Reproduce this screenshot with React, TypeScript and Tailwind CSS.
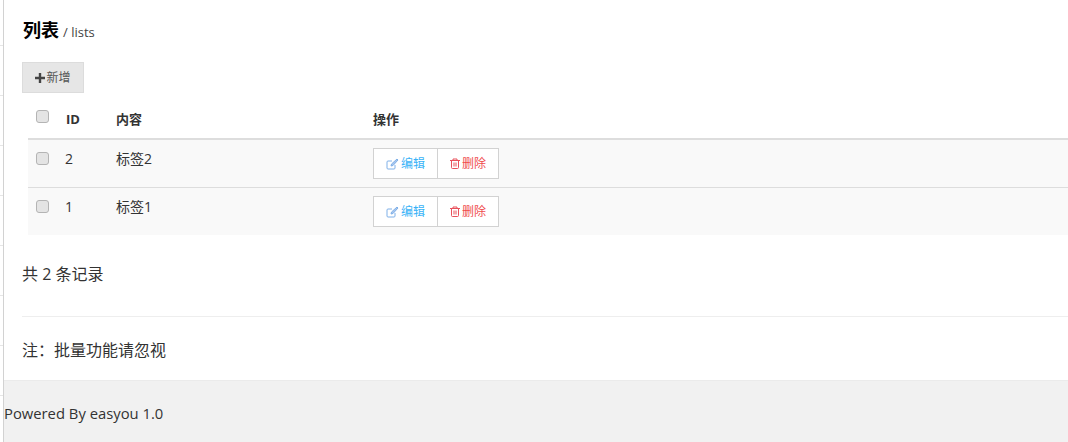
const font = { fontFamily: '"Open Sans", "Noto Sans CJK SC", sans-serif' };

function Check() {
  return <span className="block w-[13px] h-[13px] rounded-[3px] border border-[#b4b4b4] bg-[#e4e4e4]" />;
}

function Row({ id, name }: { id: string; name: string }) {
  return (
    <div className="flex h-[48px] last:h-[47px] border-b border-[#dddddd] last:border-b-0 bg-[#f9f9f9] text-[14px] text-[#333]">
      <div className="w-[37px] pl-[8px] pt-[12px]"><Check /></div>
      <div className="w-[51px] pt-[9px] leading-[20px]">{id}</div>
      <div className="w-[257px] pt-[9px] leading-[20px]">{name}</div>
      <div className="pt-[8px]">
        <div className="flex h-[31px] text-[12px] leading-[29px]">
          <div className="w-[65px] flex items-center justify-center gap-[2px] bg-white border border-[#d2d2d2] text-[#39b3f7]">
            <svg width="13" height="12" viewBox="0 0 13 12" fill="none" stroke="#7fb0e8" strokeWidth="1">
              <path d="M9 7v3a1 1 0 0 1-1 1H2a1 1 0 0 1-1-1V4a1 1 0 0 1 1-1h4" />
              <path d="M5 8l.5-2L11 1l1 1-5 5.500z" fill="#a9c6ee" />
            </svg>
            <span>编辑</span>
          </div>
          <div className="w-[62px] -ml-px flex items-center justify-center gap-[2px] bg-white border border-[#d2d2d2] text-[#ef4c4c]">
            <svg width="10" height="11" viewBox="0 0 10 11" fill="none" stroke="#e8505b" strokeWidth="1">
              <path d="M0 2.500h10M3 2V1h4v1M1.500 3v6.500a1 1 0 0 0 1 1h5a1 1 0 0 0 1-1V3M4 4.500v4M6 4.500v4" />
            </svg>
            <span>删除</span>
          </div>
        </div>
      </div>
    </div>
  );
}

export default function App() {
  return (
    <div style={font} className="relative h-[442px] w-[1068px] overflow-hidden bg-white text-[#333]">
      <div className="absolute left-0 top-0 h-full w-[4px] border-r border-[#d2d2d2]">
        <div className="h-[46px] border-b border-[#e6e6e6]" />
        <div className="h-[50px] border-b border-[#e6e6e6]" />
        <div className="h-[50px] border-b border-[#e6e6e6]" />
        <div className="h-[50px] border-b border-[#e6e6e6]" />
        <div className="h-[50px] border-b border-[#e6e6e6]" />
        <div className="h-[50px] border-b border-[#e6e6e6]" />
        <div className="h-[50px] border-b border-[#e6e6e6]" />
        <div className="h-[50px] border-b border-[#e6e6e6]" />
      </div>
      <div className="pl-[22px]">
        <div className="pt-[18px] h-[62px] flex items-baseline gap-[4px] pl-px">
          <span className="text-[18px] font-bold leading-[25px] text-black">列表</span>
          <span className="text-[13px] text-[#444]">/ lists</span>
        </div>
        <div className="flex h-[31px] w-[62px] items-center justify-center gap-[1px] bg-[#e6e6e6] border border-[#dcdcdc] text-[12px] text-[#555]">
          <svg width="10" height="10" viewBox="0 0 10 10" fill="#444">
            <path d="M3.800 0h2.400v3.800H10v2.400H6.200V10H3.800V6.200H0V3.800h3.800z" />
          </svg>
          <span>新增</span>
        </div>
        <div className="ml-[6px]">
          <div className="flex h-[47px] border-b-2 border-[#dddddd] text-[13px] font-bold text-[#333]">
            <div className="w-[37px] pl-[8px] pt-[17px]"><Check /></div>
            <div className="w-[51px] pl-px pt-[16px] leading-[20px]">ID</div>
            <div className="w-[257px] pt-[16px] leading-[20px]">内容</div>
            <div className="pt-[16px] leading-[20px]">操作</div>
          </div>
          <Row id="2" name="标签2" />
          <Row id="1" name="标签1" />
        </div>
        <div className="h-[82px] pt-[29px] text-[16px] leading-[20px] border-b border-[#eeeeee]">共 2 条记录</div>
        <div className="h-[63px] pt-[23px] text-[16px] leading-[20px]">注：批量功能请忽视</div>
      </div>
      <div className="ml-[4px] h-[62px] border-t border-[#ebebeb] bg-[#f1f1f1] pt-[22px] text-[14.800px] leading-[20px] text-[#333]">
        Powered By easyou 1.0
      </div>
    </div>
  );
}
